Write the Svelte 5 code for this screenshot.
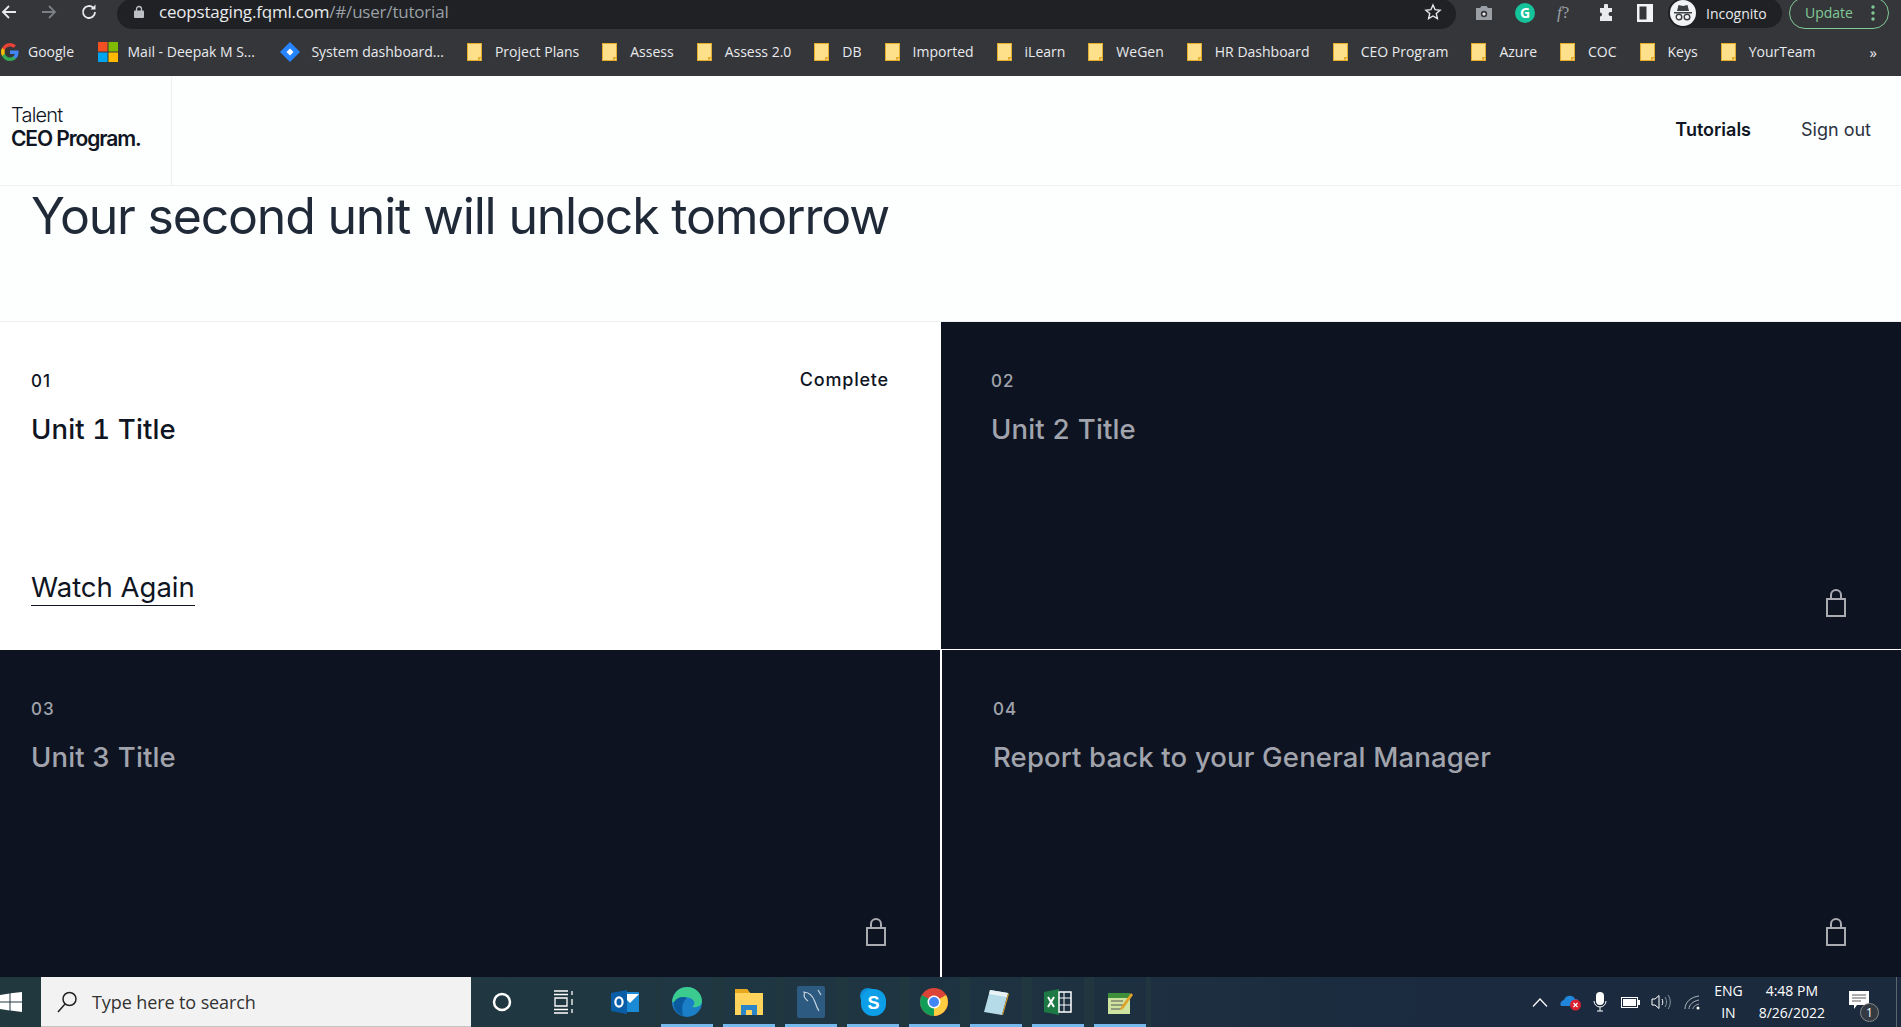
<script>
	const bookmarks = [
		'Project Plans',
		'Assess',
		'Assess 2.0',
		'DB',
		'Imported',
		'iLearn',
		'WeGen',
		'HR Dashboard',
		'CEO Program',
		'Azure',
		'COC',
		'Keys',
		'YourTeam'
	];

	const units = [
		{ no: '01', title: 'Unit 1 Title', done: true },
		{ no: '02', title: 'Unit 2 Title', cls: 'right' },
		{ no: '03', title: 'Unit 3 Title', cls: 'edge' },
		{ no: '04', title: 'Report back to your General Manager', cls: 'last' }
	];
</script>

<div class="page">
	<!-- browser chrome -->
	<div class="toolbar">
		<svg class="nav" width="16" height="16" viewBox="0 0 16 16"><path d="M15 8H2M8 2 2 8l6 6" fill="none" stroke="#e8eaed" stroke-width="1.8"/></svg>
		<svg class="nav fwd" width="16" height="16" viewBox="0 0 16 16"><path d="M1 8h13M8 2l6 6-6 6" fill="none" stroke="#7c7f83" stroke-width="1.8"/></svg>
		<svg class="nav reload" width="18" height="18" viewBox="0 0 18 18"><path d="M15 9a6 6 0 1 1-1.8-4.3" fill="none" stroke="#e8eaed" stroke-width="1.8"/><path d="M15.5 1.5v5h-5z" fill="#e8eaed"/></svg>
		<div class="omnibox">
			<svg width="10" height="13" viewBox="0 0 10 13"><path d="M2.5 6V4a2.5 2.5 0 0 1 5 0v2" fill="none" stroke="#bdc1c6" stroke-width="1.3"/><rect y="5.5" width="10" height="7.5" rx="1" fill="#bdc1c6"/></svg>
			<span class="url">ceopstaging.fqml.com<span class="path">/#/user/tutorial</span></span>
			<svg class="star" width="18" height="18" viewBox="0 0 18 18"><path d="m9 2 2.1 4.7 5 .5-3.8 3.4 1.1 5L9 13l-4.4 2.6 1.1-5L1.900 7.200l5-.5z" fill="none" stroke="#e8eaed" stroke-width="1.4"/></svg>
		</div>
		<div class="tools">
			<svg width="18" height="16" viewBox="0 0 18 16"><path d="M1 3h4l1.500-2h5L13 3h4v12H1z" fill="#9aa0a6"/><circle cx="9" cy="9" r="3.200" fill="#35363a"/><circle cx="9" cy="9" r="1.600" fill="#e8eaed"/></svg>
			<div class="gram">G</div>
			<span class="fq"><i>f</i>?</span>
			<svg width="18" height="18" viewBox="0 0 18 18"><path d="M7 1.500a2 2 0 0 1 4 0V4h4v4h-1.500a2 2 0 0 0 0 4H15v5H3v-4.500a2 2 0 0 0 0-4V4h4z" fill="#e8eaed"/></svg>
			<svg width="16" height="18" viewBox="0 0 16 18"><path d="M0 0h16v18H0zM2.500 2.500v13h7v-13z" fill="#f1f3f4" fill-rule="evenodd"/></svg>
		</div>
		<div class="incognito">
			<div class="spy">
				<svg width="20" height="18" viewBox="0 0 20 18"><path d="M1 8h18v1.500H1zM4 7l1.500-6 4.500 1 4.500-1L16 7z" fill="#3c4043"/><circle cx="6" cy="13" r="2.800" fill="none" stroke="#3c4043" stroke-width="1.400"/><circle cx="14" cy="13" r="2.800" fill="none" stroke="#3c4043" stroke-width="1.400"/></svg>
			</div>
			<span>Incognito</span>
		</div>
		<div class="update">
			<span>Update</span>
			<svg width="4" height="16" viewBox="0 0 4 16"><circle cx="2" cy="2" r="1.700" fill="#81c995"/><circle cx="2" cy="8" r="1.700" fill="#81c995"/><circle cx="2" cy="14" r="1.700" fill="#81c995"/></svg>
		</div>
	</div>

	<div class="bookmarks">
		<div class="bm google">
			<svg width="18" height="18" viewBox="0 0 18 18">
				<path d="M17.600 9.200c0-.6-.1-1.200-.2-1.800H9v3.500h4.800a4 4 0 0 1-1.800 2.700v2.200h2.900a8.800 8.800 0 0 0 2.700-6.600z" fill="#4285f4"/>
				<path d="M9 18c2.400 0 4.500-.8 5.900-2.200L12 13.600a5.400 5.400 0 0 1-8.100-2.900H1v2.300A9 9 0 0 0 9 18z" fill="#34a853"/>
				<path d="M3.900 10.700a5.300 5.300 0 0 1 0-3.400V5H1a9 9 0 0 0 0 8z" fill="#fbbc05"/>
				<path d="M9 3.600c1.300 0 2.500.5 3.400 1.300L15 2.400A9 9 0 0 0 1 5l2.900 2.300A5.400 5.400 0 0 1 9 3.600z" fill="#ea4335"/>
			</svg>
			<span>Google</span>
		</div>
		<div class="bm mail">
			<svg width="20" height="20" viewBox="0 0 20 20"><path d="M0 0h9.500v9.500H0z" fill="#f25022"/><path d="M10.500 0H20v9.500h-9.500z" fill="#7fba00"/><path d="M0 10.500h9.500V20H0z" fill="#00a4ef"/><path d="M10.500 10.500H20V20h-9.500z" fill="#ffb900"/></svg>
			<span>Mail - Deepak M S...</span>
		</div>
		<div class="bm jira">
			<svg width="20" height="20" viewBox="0 0 20 20"><path d="M10 0 20 10 10 20 0 10z" fill="#2684ff"/><path d="m10 6.500 3.500 3.500-3.500 3.500L6.500 10z" fill="#fff"/></svg>
			<span>System dashboard...</span>
		</div>
		{#each bookmarks as label}
			<div class="bm">
				<svg width="15" height="18" viewBox="0 0 15 18"><path d="M0 0h15v18H0z" fill="#e5ad2e"/><path d="M1 1h13v16H1z" fill="#fee08a"/><path d="M11 18v-4h4z" fill="#e5ad2e"/></svg>
				<span>{label}</span>
			</div>
		{/each}
		<span class="more">»</span>
	</div>

	<!-- app header -->
	<header class="head">
		<div class="brand">
			<span class="light">Talent</span>
			<strong>CEO Program.</strong>
		</div>
		<nav>
			<a class="current" href="#/user/tutorial">Tutorials</a>
			<a href="#/signout">Sign out</a>
		</nav>
	</header>

	<h1>Your second unit will unlock tomorrow</h1>

	<section class="grid">
		{#each units as u}
			<article class="tile {u.cls || ''}" class:done={u.done}>
				<div class="top">
					<span class="no">{u.no}</span>
					{#if u.done}<span class="status">Complete</span>{/if}
				</div>
				<h2>{u.title}</h2>
				{#if u.done}
					<a class="again" href="#/watch">Watch Again</a>
				{:else}
					<svg class="lock" width="22" height="30" viewBox="0 0 22 30">
						<path d="M6 11V7a5 5 0 0 1 10 0v4" fill="none" stroke="#a9abb0" stroke-width="2"/>
						<rect x="2" y="11" width="18" height="17" fill="none" stroke="#a9abb0" stroke-width="2"/>
					</svg>
				{/if}
			</article>
		{/each}
	</section>

	<!-- windows taskbar -->
	<footer class="taskbar">
		<svg class="win" width="22" height="20" viewBox="0 0 22 20"><path d="M0 3l9.500-1.500V9.500H0zM10.500 1.300 22 0v9.500H10.500zM0 10.500h9.500v8L0 17zM10.500 10.500H22V20l-11.500-1.600z" fill="#fff"/></svg>
		<div class="search">
			<svg width="24" height="24" viewBox="0 0 24 24"><circle cx="14.500" cy="9" r="6.500" fill="none" stroke="#222" stroke-width="1.500"/><path d="M10 14 3 22" stroke="#222" stroke-width="1.500"/></svg>
			<span>Type here to search</span>
		</div>
		<div class="apps">
			<div class="app"><svg width="20" height="20" viewBox="0 0 20 20"><circle cx="10" cy="10" r="8" fill="none" stroke="#fff" stroke-width="2.500"/></svg></div>
			<div class="app"><svg width="22" height="24" viewBox="0 0 22 24"><path d="M1 1h14M1 23h14M1 4.500h14M1 19.500h14M19 1v4M19 9v6M19 19v4" stroke="#fff" stroke-width="1.300" fill="none"/><path d="M2 8h12v8H2z" fill="none" stroke="#fff" stroke-width="1.300"/></svg></div>
			<div class="app"><svg width="28" height="28" viewBox="0 0 28 28"><path d="M10 4h18v20H10z" fill="#1a8ad4"/><path d="M10 6h18l-9 9z" fill="#fff"/><path d="M0 5l16-3v24L0 23z" fill="#0a5ea8"/><ellipse cx="8" cy="14" rx="3.600" ry="4.600" fill="none" stroke="#fff" stroke-width="2.200"/></svg></div>
			<div class="app on"><svg width="32" height="32" viewBox="0 0 32 32"><circle cx="16" cy="16" r="15" fill="#1a7fc7"/><path d="M1 16C2 6 9 1 16 1c9 0 15 7 15 14 0 5-5 7-10 6 3-2 3-5 1-7-3-4-13-4-17 2z" fill="#3ccb8e"/><path d="M12 30c-6-2-10-8-9-14 3-5 9-6 13-4-4 3-6 8-4 18z" fill="#0c5a9e"/></svg></div>
			<div class="app on"><svg width="30" height="28" viewBox="0 0 30 28"><path d="M1 1h12l3 4h13v22H1z" fill="#ffd35c"/><path d="M1 1h12l3 4H1z" fill="#e8a81f"/><path d="M7 17h16v10H7z" fill="#2a86c9"/><path d="M12 22h6v5h-6z" fill="#ffd35c"/></svg></div>
			<div class="app on"><svg width="28" height="32" viewBox="0 0 28 32"><rect width="28" height="32" rx="2" fill="#2c5a80"/><path d="M6 6c6 0 10 4 12 10 1 3 2 6 4 9M8 6c-2 4 0 7 3 9M21 4l3 5" fill="none" stroke="#c8d4dc" stroke-width="1.200"/></svg></div>
			<div class="app on"><svg width="28" height="30" viewBox="0 0 28 30"><circle cx="9" cy="9" r="8" fill="#0c8fd8"/><rect x="2" y="2" width="25" height="27" rx="12" fill="#0c9fe8"/><text x="14.500" y="21.500" text-anchor="middle" class="skype">S</text></svg></div>
			<div class="app on"><svg width="28" height="28" viewBox="0 0 28 28"><circle cx="14" cy="14" r="14" fill="#db4437"/><path d="M14 14 26.100 7A14 14 0 0 1 14 28z" fill="#ffcd40"/><path d="M14 14 14 28A14 14 0 0 1 1.900 7z" fill="#0f9d58"/><circle cx="14" cy="14" r="6.500" fill="#fff"/><circle cx="14" cy="14" r="5" fill="#4285f4"/></svg></div>
			<div class="app on"><svg width="28" height="28" viewBox="0 0 28 28"><path d="M8 2 26 5l-6 22L2 24z" fill="#b6dbe8"/><path d="M8 2 26 5l-1 4L7 6z" fill="#e9f3f6"/><path d="M20 27l6-22 1 1-6 21z" fill="#d59b2f"/></svg></div>
			<div class="app on"><svg width="28" height="26" viewBox="0 0 28 26"><path d="M0 3 15 0v26L0 23z" fill="#1d7a45"/><path d="M15 3h12v20H15z" fill="none" stroke="#fff" stroke-width="1.500"/><path d="M20 3v20M15 9h12M15 16h12" stroke="#fff"/><path d="m4 8 6 10M10 8 4 18" stroke="#fff" stroke-width="2"/></svg></div>
			<div class="app on"><svg width="26" height="26" viewBox="0 0 26 26"><path d="M1 4h22v21H1z" fill="#cfe3a0"/><path d="M1 4h22v5H1z" fill="#3f8f3a"/><path d="M4 12h12M4 16h14M4 20h10" stroke="#555"/><path d="m14 18 10-14 2 2-10 14-3 1z" fill="#e0a32a"/></svg></div>
		</div>
		<div class="tray">
			<svg class="chev" width="16" height="9" viewBox="0 0 16 9"><path d="M1 8.500 8 1l7 7.500" fill="none" stroke="#fff" stroke-width="1.200"/></svg>
			<svg class="od" width="22" height="18" viewBox="0 0 22 18"><path d="M1 13a4 4 0 0 1 3-6 6 6 0 0 1 11-1 4 4 0 0 1 3 7z" fill="#2086dc"/><circle cx="15.500" cy="12" r="5.500" fill="#d92030"/><path d="m13.500 10 4 4m0-4-4 4" stroke="#fff" stroke-width="1.200"/></svg>
			<svg class="mic" width="14" height="20" viewBox="0 0 14 20"><rect x="3" y="0" width="8" height="13" rx="4" fill="#fff"/><path d="M1 9a6 6 0 0 0 12 0M7 15v4M4 19h6" fill="none" stroke="#fff"/></svg>
			<svg class="batt" width="19" height="11" viewBox="0 0 19 11"><rect x=".5" y=".5" width="16" height="10" fill="none" stroke="#fff"/><rect x="2" y="2" width="13" height="7" fill="#fff"/><rect x="17" y="3" width="2" height="5" fill="#fff"/></svg>
			<svg width="20" height="16" viewBox="0 0 20 16"><path d="M1 5h3l4-3.500v13L4 11H1z" fill="none" stroke="#fff"/><path d="M11 5c1 2 1 4 0 6" fill="none" stroke="#fff"/><path d="M14 3c2 3 2 7 0 10M17 1c3 4 3 10 0 14" fill="none" stroke="#8a96a3"/></svg>
			<svg width="17" height="15" viewBox="0 0 17 15"><path d="M1 14C1 7 7 2 15 1M5 14c0-4 4-8 10-9M9 14c0-2 2-4 6-5" fill="none" stroke="#aeb6be"/><circle cx="14" cy="13" r="1.500" fill="#fff"/></svg>
			<div class="lang"><span>ENG</span><span>IN</span></div>
			<div class="clock"><span>4:48 PM</span><span>8/26/2022</span></div>
			<div class="notif">
				<svg width="20" height="18" viewBox="0 0 20 18"><path d="M0 0h20v14H8l-3 4v-4H0z" fill="#fff"/><path d="M3 4h14M3 7h14M3 10h9" stroke="#333" stroke-width=".8"/></svg>
				<span class="badge">1</span>
			</div>
		</div>
	</footer>
</div>

<style>
	:global(body) {
		margin: 0;
		background: #fff;
	}

	.page {
		height: 1027px;
		overflow: hidden;
		display: flex;
		flex-direction: column;
		font-family: Inter, 'Liberation Sans', sans-serif;
		color: #0f1523;
		background: #fdfefe;
	}

	/* Browser chrome */
	.toolbar {
		height: 30px;
		flex: none;
		display: flex;
		align-items: center;
		background: #35363a;
		font-family: 'Open Sans', sans-serif;
	}

	.nav {
		flex: none;
		margin-left: 1px;
		margin-top: -6px;
	}

	.fwd {
		margin-left: 24px;
	}

	.reload {
		margin-left: 23px;
	}

	.omnibox {
		width: 1339px;
		height: 30px;
		margin-left: 19px;
		margin-top: -3px;
		padding: 0 0 4px 17px;
		box-sizing: border-box;
		display: flex;
		align-items: center;
		background: #202124;
		border-radius: 16px;
	}

	.url {
		margin-left: 15px;
		font-size: 17px;
		letter-spacing: -0.2px;
		color: #e8eaed;
	}

	.path {
		color: #9aa0a6;
	}

	.star {
		margin-left: auto;
		margin-right: 14px;
	}

	.tools {
		display: flex;
		align-items: center;
		gap: 22px;
		margin-left: 19px;
		margin-top: -4px;
	}

	.gram {
		width: 20px;
		height: 20px;
		border-radius: 50%;
		background: #15c39a;
		color: #fff;
		font-size: 14px;
		font-weight: 700;
		text-align: center;
		line-height: 20px;
	}

	.fq {
		width: 18px;
		font: 17px 'Liberation Serif', serif;
		color: #9aa0a6;
	}

	.incognito {
		display: flex;
		align-items: center;
		gap: 10px;
		width: 114px;
		height: 30px;
		margin-left: 15px;
		margin-top: -4px;
		border-radius: 15px;
		background: #202124;
		color: #e8eaed;
		font-size: 14px;
	}

	.spy {
		width: 26px;
		height: 26px;
		margin-left: 2px;
		border-radius: 50%;
		background: #f1f3f4;
		display: flex;
		align-items: center;
		justify-content: center;
	}

	.update {
		display: flex;
		align-items: center;
		justify-content: space-between;
		width: 100px;
		height: 32px;
		margin-left: 7px;
		margin-top: -5px;
		padding: 0 13px 0 15px;
		box-sizing: border-box;
		border: 1px solid #81c995;
		border-radius: 16px;
		color: #81c995;
		font-size: 14px;
	}

	.bookmarks {
		height: 46px;
		flex: none;
		display: flex;
		align-items: center;
		background: #35363a;
		color: #e8eaed;
		font-family: 'Open Sans', sans-serif;
		font-size: 14px;
		box-sizing: border-box;
		padding-bottom: 3px;
	}

	.bm {
		display: flex;
		align-items: center;
		gap: 13px;
		margin-right: 23px;
		white-space: nowrap;
	}

	.google {
		gap: 9px;
		margin-left: 1px;
		margin-right: 23.500px;
	}

	.mail {
		gap: 10px;
		margin-right: 25.500px;
	}

	.jira {
		gap: 11px;
		margin-right: 23px;
	}

	.more {
		margin-left: auto;
		margin-right: 24px;
		font-size: 15px;
	}

	/* App header */
	.head {
		height: 110px;
		flex: none;
		display: flex;
		align-items: center;
		justify-content: space-between;
		box-sizing: border-box;
		border-bottom: 1px solid #eef0f2;
	}

	.brand {
		width: 172px;
		height: 109px;
		box-sizing: border-box;
		padding: 0 0 7px 11px;
		border-right: 1px solid #eef0f2;
		display: flex;
		flex-direction: column;
		justify-content: center;
		font-size: 20px;
		line-height: 23px;
		letter-spacing: -0.8px;
	}

	.light {
		font-weight: 300;
	}

	.brand strong {
		font-size: 21px;
		font-weight: 600;
		letter-spacing: -1.1px;
	}

	nav {
		display: flex;
		gap: 50px;
		margin-right: 30px;
		margin-bottom: 2px;
		font-size: 18px;
	}

	nav a {
		color: #2b3240;
		text-decoration: none;
	}

	nav .current {
		font-weight: 600;
		color: #0f1523;
	}

	h1 {
		height: 136px;
		flex: none;
		margin: 0;
		padding: 0 0 0 31px;
		box-sizing: border-box;
		font-size: 50px;
		font-weight: 400;
		line-height: 60px;
		letter-spacing: -1.2px;
		color: #1f2937;
		border-bottom: 1px solid #eef0f2;
	}

	.grid {
		display: grid;
		grid-template-columns: 941px 1fr;
		grid-template-rows: 328px 328px;
		flex: none;
	}

	.tile {
		display: flex;
		flex-direction: column;
		box-sizing: border-box;
		padding: 47px 52px 0 31px;
		background: #0d1321;
		color: #a1a4ac;
	}

	.tile.right {
		padding-left: 50px;
		border-bottom: 1px solid #fff;
	}

	.tile.edge {
		box-shadow: inset -1px 0 0 #fff;
	}

	.tile.last {
		padding-left: 52px;
		box-shadow: inset 1px 0 0 #fff;
	}

	.tile.done {
		background: #fff;
		color: #0f1523;
	}

	.top {
		display: flex;
		justify-content: space-between;
		align-items: center;
		height: 24px;
	}

	.no {
		font-size: 17px;
		font-weight: 500;
		letter-spacing: 1px;
	}

	.status {
		font-size: 18px;
		font-weight: 500;
		letter-spacing: 0.8px;
		margin-top: -3px;
	}

	h2 {
		margin: 18px 0 0;
		font-size: 27.500px;
		line-height: 36px;
		font-weight: 500;
		letter-spacing: 0.15px;
		font-feature-settings: 'tnum';
	}

	.again {
		align-self: flex-start;
		margin-top: 122px;
		font-size: 27.500px;
		line-height: 36px;
		color: #0f1523;
		text-decoration: none;
		border-bottom: 1px solid #0f1523;
	}

	.lock {
		align-self: flex-end;
		margin-top: auto;
		margin-bottom: 31px;
		margin-right: 2px;
	}

	/* Windows taskbar */
	.taskbar {
		height: 50px;
		flex: none;
		display: flex;
		align-items: center;
		box-sizing: border-box;
		padding-right: 4px;
		background: linear-gradient(90deg, #21383f, #1f3742 40%, #1b2a3f 75%, #1c2a3d);
		margin-top: -1px;
		position: relative;
		font-family: 'Open Sans', sans-serif;
	}

	.win {
		flex: none;
		margin-right: 19px;
	}

	.search {
		width: 430px;
		height: 50px;
		flex: none;
		box-sizing: border-box;
		padding-left: 14px;
		display: flex;
		align-items: center;
		gap: 13px;
		background: #f2f2f2;
		border-bottom: 1px solid #c4c4c4;
		color: #333;
		font-size: 18px;
		letter-spacing: -0.1px;
	}

	.apps {
		display: flex;
	}

	.app {
		width: 61.800px;
		height: 50px;
		box-sizing: border-box;
		display: flex;
		align-items: center;
		justify-content: center;
	}

	.app.on {
		box-shadow: inset 0 -3px 0 #76b9ed;
		border-left: 5px solid #21373f;
		border-right: 5px solid #21373f;
	}

	.skype {
		font: 700 18px 'Liberation Sans', sans-serif;
		fill: #fff;
	}

	.tray {
		margin-left: auto;
		align-self: stretch;
		display: flex;
		align-items: center;
		gap: 13px;
		color: #fff;
		padding-right: 17px;
		border-right: 1px solid #5a6672;
	}

	.chev {
		margin-right: -1px;
	}

	.od {
		margin-right: -2px;
	}

	.mic {
		margin-right: 1px;
	}

	.batt {
		margin-right: -2px;
	}

	.lang,
	.clock {
		display: flex;
		flex-direction: column;
		align-items: center;
		line-height: 22px;
		font-size: 14px;
	}

	.clock {
		margin-left: 3px;
	}

	.notif {
		position: relative;
		margin-left: 11px;
		margin-right: 10px;
	}

	.badge {
		position: absolute;
		right: -10px;
		bottom: -8px;
		width: 19px;
		height: 19px;
		border-radius: 50%;
		background: #333a42;
		border: 1px solid #888;
		box-sizing: border-box;
		font-size: 12px;
		line-height: 17px;
		text-align: center;
	}
</style>
